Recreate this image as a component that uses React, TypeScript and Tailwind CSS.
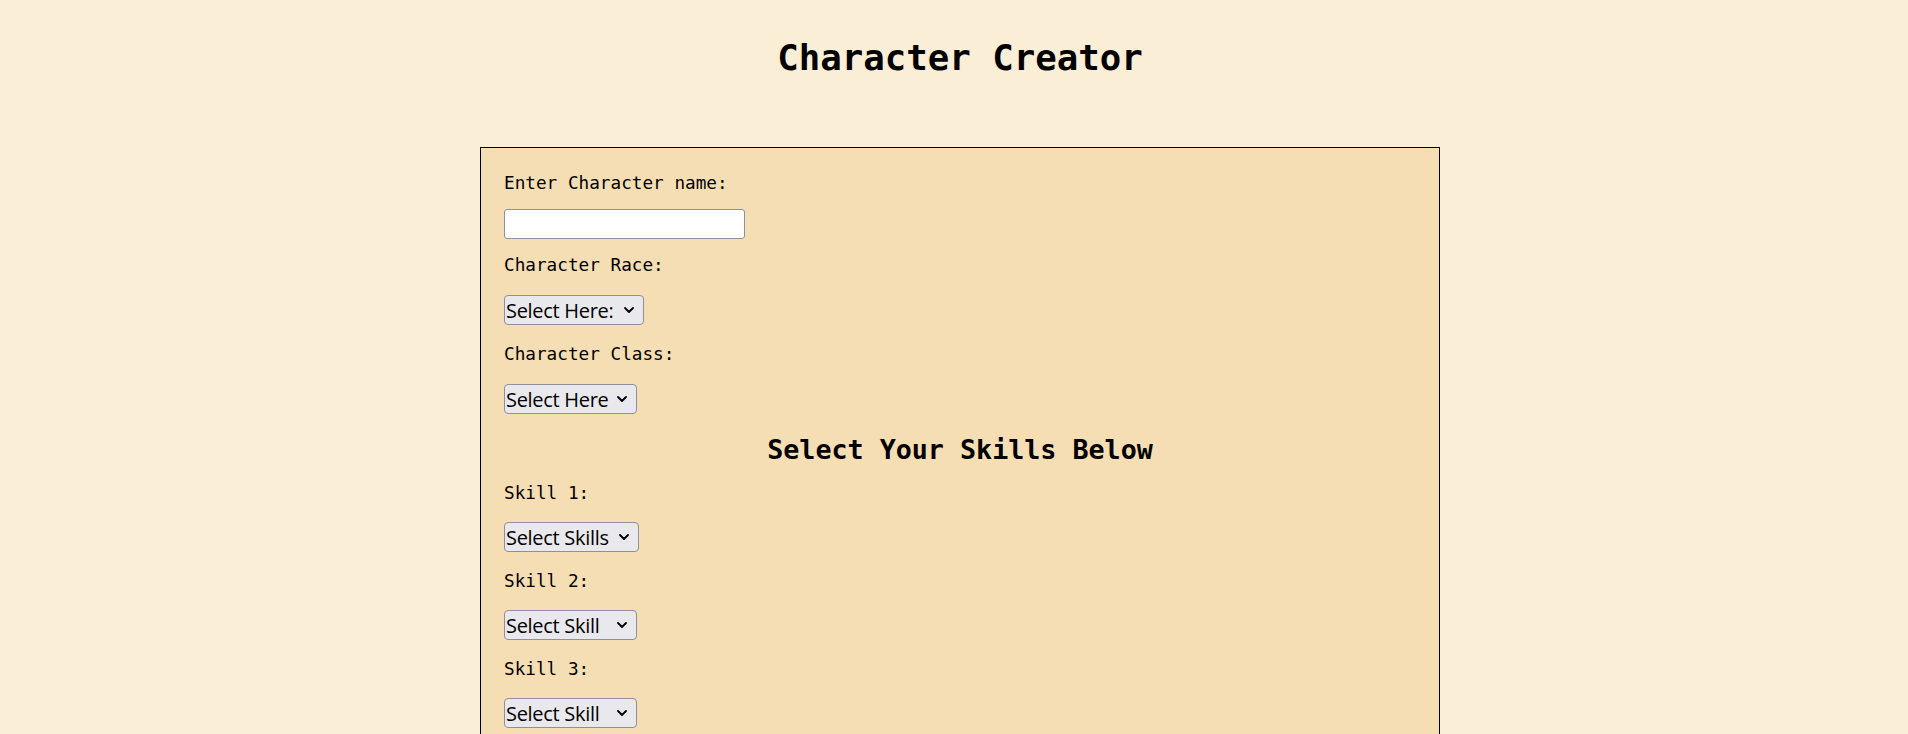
import React from "react";

type Field = { label: string; placeholder: string; width: string };

const skills: Field[] = [
  { label: "Skill 1:", placeholder: "Select Skills", width: "w-[135px]" },
  { label: "Skill 2:", placeholder: "Select Skill", width: "w-[133px]" },
  { label: "Skill 3:", placeholder: "Select Skill", width: "w-[133px]" },
];

function Chevron() {
  return (
    <svg
      viewBox="0 0 10 6"
      className="pointer-events-none absolute right-[10px] top-1/2 h-[6px] w-[10px] -translate-y-1/2 text-black"
      fill="none"
    >
      <path d="M1 1 L5 5 L9 1" stroke="currentColor" strokeWidth="1.8" strokeLinecap="round" strokeLinejoin="round" />
    </svg>
  );
}

function Dropdown({ placeholder, width }: { placeholder: string; width: string }) {
  return (
    <div className={`relative h-[30px] ${width}`}>
      <select
        defaultValue=""
        className="h-full w-full appearance-none rounded-[4px] border border-[#8f8f9d] bg-[#e9e9ed] pl-[1px] font-['Open_Sans',sans-serif] text-[20px] tracking-[-0.3px] text-black outline-none"
      >
        <option value="">{placeholder}</option>
      </select>
      <Chevron />
    </div>
  );
}

function Label({ children, className = "" }: { children: React.ReactNode; className?: string }) {
  return (
    <div className={`font-['DejaVu_Sans_Mono',monospace] text-[17.7px] leading-[20px] text-black ${className}`}>
      {children}
    </div>
  );
}

export default function App() {
  return (
    <div className="h-screen overflow-hidden bg-[#fbeed6] pl-3 pt-[38px]">
      {/* Page Title */}
      <h1 className="text-center font-['DejaVu_Sans_Mono',monospace] text-[35.7px] font-bold leading-[40px] text-black">
        Character Creator
      </h1>

      {/* Form Box */}
      <div className="mx-auto mt-[69px] w-[960px] border border-black bg-[#f5deb3] px-[23px] pb-10 pt-[25px]">
        <Label>Enter Character name:</Label>
        <input
          type="text"
          className="mt-[16px] block h-[30px] w-[241px] rounded-[3px] border border-[#8f8f9d] bg-white outline-none"
        />

        <Label className="mt-[16px]">Character Race:</Label>
        <div className="mt-[20px]">
          <Dropdown placeholder="Select Here:" width="w-[140px]" />
        </div>

        <Label className="mt-[19px]">Character Class:</Label>
        <div className="mt-[20px]">
          <Dropdown placeholder="Select Here" width="w-[133px]" />
        </div>

        <h2 className="mt-[20px] text-center font-['DejaVu_Sans_Mono',monospace] text-[26.7px] font-bold leading-[32px] text-black">
          Select Your Skills Below
        </h2>

        {skills.map((skill, i) => (
          <div key={skill.label} className={i === 0 ? "mt-[17px]" : "mt-[19px]"}>
            <Label>{skill.label}</Label>
            <div className="mt-[19px]">
              <Dropdown placeholder={skill.placeholder} width={skill.width} />
            </div>
          </div>
        ))}
      </div>
    </div>
  );
}
